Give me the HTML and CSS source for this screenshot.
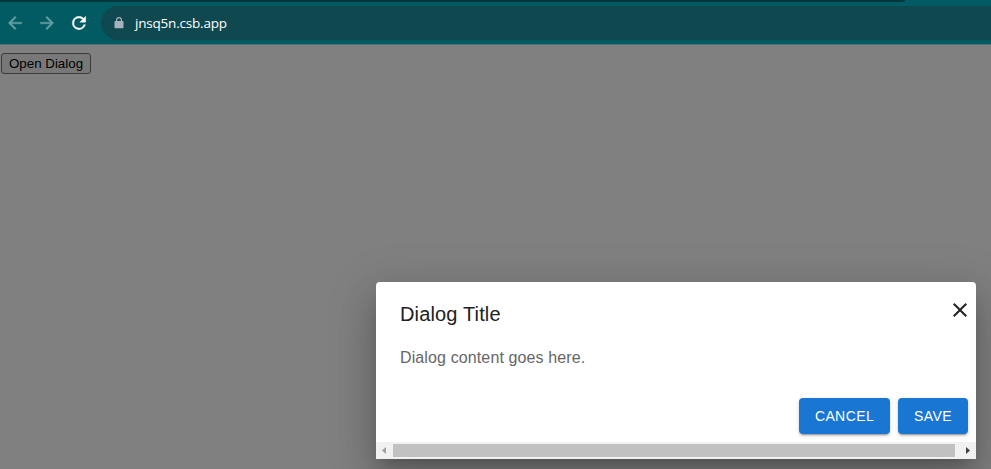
FILE: index.html
```html
<!DOCTYPE html>
<html lang="en">
<head>
<meta charset="utf-8">
<title>Dialog</title>
<link rel="stylesheet" href="styles.css">
</head>
<body>
<header class="browser">
  <div class="tabstrip"></div>
  <div class="toolbar">
    <svg class="nav" viewBox="0 0 24 24"><path d="M20 11H7.83l5.59-5.59L12 4l-8 8 8 8 1.41-1.41L7.83 13H20v-2z"/></svg>
    <svg class="nav" viewBox="0 0 24 24"><path d="M12 4l-1.41 1.41L16.17 11H4v2h12.17l-5.58 5.59L12 20l8-8z"/></svg>
    <svg class="nav reload" viewBox="0 0 24 24"><path d="M17.65 6.35A7.96 7.96 0 0 0 12 4a8 8 0 1 0 7.73 10h-2.08A6 6 0 1 1 12 6c1.66 0 3.14.69 4.22 1.78L13 11h7V4l-2.35 2.35z"/></svg>
    <div class="address">
      <svg class="lock" viewBox="0 0 10 12"><path fill-rule="evenodd" d="M2 4V3a3 3 0 0 1 6 0v1h.7q.8 0 .8.8v5.7q0 .8-.8.8H1.3q-.8 0-.8-.8V4.800q0-.8.8-.8zM3.200 4h3.600V3a1.800 1.800 0 0 0-3.600 0z"/></svg>
      <span>jnsq5n.csb.app</span>
    </div>
  </div>
</header>
<main class="page">
  <button class="open">Open Dialog</button>
  <section class="dialog" role="dialog">
    <div class="heading">
      <h2>Dialog Title</h2>
      <svg class="close" viewBox="0 0 24 24"><path d="M19 6.410 17.590 5 12 10.590 6.410 5 5 6.410 10.590 12 5 17.590 6.410 19 12 13.410 17.590 19 19 17.590 13.410 12z"/></svg>
    </div>
    <p>Dialog content goes here.</p>
    <div class="actions"><button>CANCEL</button><button>SAVE</button></div>
    <div class="scrollbar">
      <svg class="arrow dim" viewBox="0 0 17 17"><path d="M10 5v7L6 8.500z"/></svg>
      <div class="thumb"></div>
      <svg class="arrow" viewBox="0 0 17 17"><path d="M7 5v7l4-3.500z"/></svg>
    </div>
  </section>
</main>
</body>
</html>
```
FILE: styles.css
```css
* { box-sizing: border-box; }
body {
  margin: 0;
  height: 469px;
  overflow: hidden;
  display: flex;
  flex-direction: column;
  background: #808080;
  font-family: "Liberation Sans", Arial, sans-serif;
}
.browser { height: 45px; flex: none; background: #025b62; border-bottom: 1px solid #4c7477; }
.tabstrip { width: 905px; height: 2px; background: #03373d; border-bottom-right-radius: 2px; }
.toolbar { display: flex; align-items: center; height: 42px; padding-left: 5px; }
.nav { width: 20px; height: 20px; margin-right: 12px; fill: #62a0a6; stroke: #62a0a6; stroke-width: .5; }
.reload { fill: #fff; stroke: #fff; }
.address {
  flex: 1;
  display: flex;
  align-items: center;
  height: 34px;
  padding: 0 0 1px 13px;
  border-radius: 17px 0 0 17px;
  background: #0f484f;
  color: #fff;
  font: 13.5px "Open Sans", sans-serif;
}
.lock { width: 10px; height: 12px; margin-right: 11px; fill: #a3b2bb; }
.address span { letter-spacing: -0.2px; }
.page { flex: 1; display: flex; flex-direction: column; align-items: flex-start; padding: 8px 15px 10px 1px; }
.open {
  width: 90px;
  height: 21px;
  padding: 0;
  border: 1px solid #3b3b3b;
  border-radius: 3px;
  background: #787878;
  color: #000;
  font: 13.333px "Liberation Sans", Arial, sans-serif;
}
.dialog {
  display: flex;
  flex-direction: column;
  width: 600px;
  height: 177px;
  margin: auto 0 0 auto;
  overflow: hidden;
  border-radius: 4px 4px 0 0;
  background: #fff;
  box-shadow: 0 11px 15px -7px rgba(0,0,0,.2), 0 24px 38px 3px rgba(0,0,0,.14), 0 9px 46px 8px rgba(0,0,0,.12);
}
.heading { display: flex; justify-content: space-between; height: 64px; padding: 16px 4px 16px 24px; }
h2 { margin: 0; color: #212121; font-size: 20px; font-weight: 400; line-height: 32px; letter-spacing: .15px; }
.close { width: 24px; height: 24px; fill: #222; }
.dialog p { height: 44px; margin: 0; padding: 0 24px 20px; color: #666; font-size: 16px; line-height: 24px; letter-spacing: .12px; }
.actions { display: flex; justify-content: flex-end; gap: 8px; padding: 8px; }
.actions button {
  height: 36px;
  padding: 0 16px;
  border: 0;
  border-radius: 4px;
  background: #1976d2;
  color: #fff;
  font: 14px "Liberation Sans", Arial, sans-serif;
  letter-spacing: .4px;
  box-shadow: 0 3px 1px -2px rgba(0,0,0,.2), 0 2px 2px rgba(0,0,0,.14), 0 1px 5px rgba(0,0,0,.12);
}
.scrollbar { display: flex; align-items: center; height: 17px; background: #f1f1f1; }
.arrow { width: 17px; height: 17px; flex: none; fill: #404040; }
.dim { fill: #a0a0a0; }
.thumb { width: 562px; height: 13px; margin-right: 4px; background: #c1c1c1; }
```
